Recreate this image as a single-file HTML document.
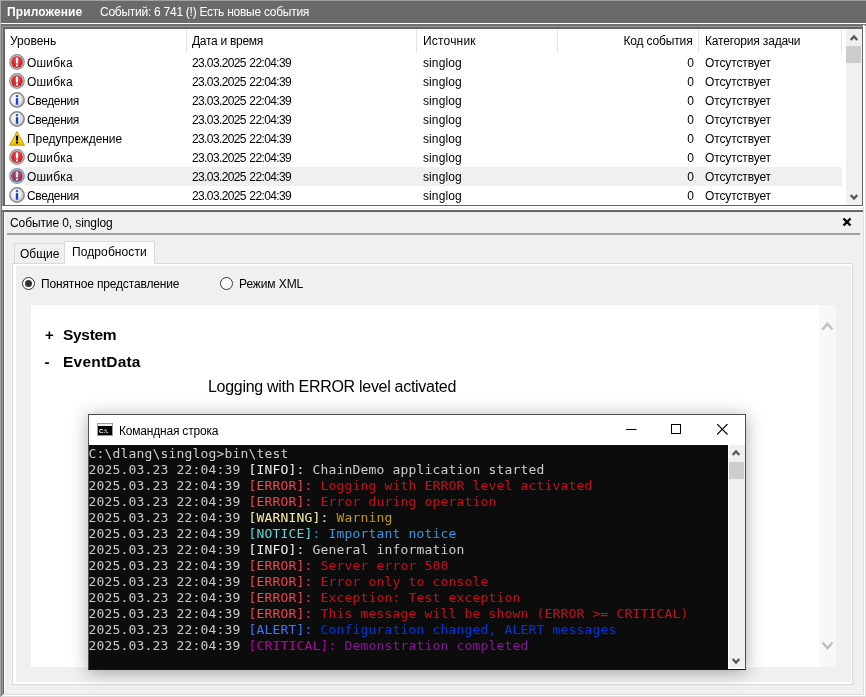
<!DOCTYPE html>
<html lang="ru">
<head>
<meta charset="utf-8">
<title>Просмотр событий</title>
<style>
html,body{margin:0;padding:0;}
body{will-change:transform;width:866px;height:697px;overflow:hidden;position:relative;background:#f0f0f0;font-family:"Liberation Sans",sans-serif;font-size:12px;color:#000;}
.a{position:absolute;}
.t{position:absolute;white-space:nowrap;line-height:16px;height:16px;}
#hdr{left:0;top:0;width:866px;height:23px;background:#6a6a6a;}
#hdr .t{color:#fff;top:4px;}
/* list */
#list{left:5px;top:29px;width:857px;height:176px;background:#fff;overflow:hidden;}
.row{position:absolute;left:0;width:841px;height:19px;}
.row .t{top:2px;}
.sel{position:absolute;left:20px;top:0;width:817px;height:19px;background:#f0f0f0;}
.ic{position:absolute;left:4px;top:1px;width:16px;height:16px;}
.hd .t{top:4px;}
.div{position:absolute;top:0;width:1px;height:24px;background:#e5e5e5;}
/* console */
#cmd{left:88px;top:414px;width:656px;height:254px;border:1px solid #505050;border-bottom-color:#161616;background:#fff;box-shadow:0 2px 16px rgba(0,0,0,.34);}
#con{left:0;top:30px;width:639px;height:224px;background:#0c0c0c;font-family:"DejaVu Sans Mono","Liberation Mono",monospace;font-size:13px;color:#ccc;overflow:hidden;}
#con div{position:absolute;left:-.5px;margin-top:1px;height:16px;line-height:16px;white-space:pre;letter-spacing:.174px;}
.w{color:#f2f2f2}.r{color:#c50f1f}.R{color:#e74856}.y{color:#c19c00}.Y{color:#f9f1a5}.c{color:#3a96dd}.C{color:#61d6d6}.b{color:#0037da}.B{color:#3b78ff}.m{color:#881798}.M{color:#b4009e}

#h1{letter-spacing:.11px}#h2{letter-spacing:-.26px}#c2{letter-spacing:-.28px}#c3{letter-spacing:.19px}#c4{letter-spacing:-.15px}#c5{letter-spacing:-.16px}
#d1{letter-spacing:-.1px}#r1{letter-spacing:-.15px}#t2{letter-spacing:.1px}#r2{letter-spacing:-.1px}#x5{letter-spacing:-.29px}#w1{letter-spacing:-.2px}
.lvE,.lvS{letter-spacing:.2px}.lvI{letter-spacing:-.37px}.lvW{letter-spacing:-.08px}.dt{letter-spacing:-.62px;word-spacing:.8px}.src{letter-spacing:.1px}.cat{letter-spacing:-.12px}
</style>
</head>
<body>
<!-- window frame edges -->
<div class="a" id="hdr">
  <span class="t" id="h1" style="left:7px;font-weight:bold;">Приложение</span>
  <span class="t" id="h2" style="left:100px;">Событий: 6 741 (!) Есть новые события</span>
</div>
<div class="a" style="left:0;top:0;width:866px;height:1px;background:#a0a0a0;"></div>
<div class="a" style="left:0;top:23px;width:866px;height:1px;background:#fff;"></div>
<div class="a" style="left:0;top:24px;width:866px;height:182px;background:#707070;"></div>
<div class="a" style="left:2px;top:26px;width:862px;height:1px;background:#9a9a9a;"></div>
<div class="a" style="left:2px;top:27px;width:1px;height:179px;background:#9a9a9a;"></div>
<div class="a" style="left:3px;top:27px;width:860px;height:179px;background:#666;"></div>
<div class="a" style="left:863px;top:25px;width:2px;height:181px;background:#fff;"></div>
<div class="a" style="left:865px;top:26px;width:1px;height:671px;background:#ddd;"></div>

<div class="a" id="list">
  <div class="row hd" style="top:0;height:24px;">
    <span class="t" id="c1" style="left:5px;">Уровень</span>
    <span class="t" id="c2" style="left:187px;">Дата и время</span>
    <span class="t" id="c3" style="left:418px;">Источник</span>
    <span class="t" id="c4" style="right:153.5px;">Код события</span>
    <span class="t" id="c5" style="left:700px;">Категория задачи</span>
    <div class="div" style="left:181px;"></div>
    <div class="div" style="left:411px;"></div>
    <div class="div" style="left:552px;"></div>
    <div class="div" style="left:693px;"></div>
    <div class="div" style="left:836px;"></div>
  </div>
<!--ROWS-->
  <div class="row" style="top:24px;"><svg class="ic" viewBox="0 0 16 16"><defs><radialGradient id="gE0" cx="50%" cy="25%" r="75%"><stop offset="0" stop-color="#e8474a"/><stop offset="1" stop-color="#c01f25"/></radialGradient></defs><circle cx="8" cy="8" r="7.15" fill="#ededed" stroke="#959595" stroke-width="1.5"/><circle cx="8" cy="8" r="5.9" fill="url(#gE0)"/><rect x="6.9" y="3.4" width="2.2" height="6.2" rx="0.6" fill="#ffffff"/><rect x="6.9" y="10.5" width="2.2" height="2" fill="#ffffff"/></svg><span class="t lvE" style="left:22px;">Ошибка</span><span class="t dt" style="left:187px;">23.03.2025 22:04:39</span><span class="t src" style="left:418px;">singlog</span><span class="t" style="right:152px;">0</span><span class="t cat" style="left:700px;">Отсутствует</span></div>
  <div class="row" style="top:43px;"><svg class="ic" viewBox="0 0 16 16"><defs><radialGradient id="gE1" cx="50%" cy="25%" r="75%"><stop offset="0" stop-color="#e8474a"/><stop offset="1" stop-color="#c01f25"/></radialGradient></defs><circle cx="8" cy="8" r="7.15" fill="#ededed" stroke="#959595" stroke-width="1.5"/><circle cx="8" cy="8" r="5.9" fill="url(#gE1)"/><rect x="6.9" y="3.4" width="2.2" height="6.2" rx="0.6" fill="#ffffff"/><rect x="6.9" y="10.5" width="2.2" height="2" fill="#ffffff"/></svg><span class="t lvE" style="left:22px;">Ошибка</span><span class="t dt" style="left:187px;">23.03.2025 22:04:39</span><span class="t src" style="left:418px;">singlog</span><span class="t" style="right:152px;">0</span><span class="t cat" style="left:700px;">Отсутствует</span></div>
  <div class="row" style="top:62px;"><svg class="ic" viewBox="0 0 16 16"><defs><radialGradient id="gI2" cx="42%" cy="42%" r="62%"><stop offset="0" stop-color="#ffffff"/><stop offset="0.55" stop-color="#ececec"/><stop offset="1" stop-color="#b4b4b4"/></radialGradient></defs><circle cx="8" cy="8" r="7.15" fill="url(#gI2)" stroke="#8a8a8a" stroke-width="1.5"/><rect x="6.8" y="3" width="2.4" height="2.2" rx="0.8" fill="#2a57c8"/><rect x="6.8" y="6.1" width="2.4" height="6.6" fill="#1446c2"/></svg><span class="t lvI" style="left:22px;">Сведения</span><span class="t dt" style="left:187px;">23.03.2025 22:04:39</span><span class="t src" style="left:418px;">singlog</span><span class="t" style="right:152px;">0</span><span class="t cat" style="left:700px;">Отсутствует</span></div>
  <div class="row" style="top:81px;"><svg class="ic" viewBox="0 0 16 16"><defs><radialGradient id="gI3" cx="42%" cy="42%" r="62%"><stop offset="0" stop-color="#ffffff"/><stop offset="0.55" stop-color="#ececec"/><stop offset="1" stop-color="#b4b4b4"/></radialGradient></defs><circle cx="8" cy="8" r="7.15" fill="url(#gI3)" stroke="#8a8a8a" stroke-width="1.5"/><rect x="6.8" y="3" width="2.4" height="2.2" rx="0.8" fill="#2a57c8"/><rect x="6.8" y="6.1" width="2.4" height="6.6" fill="#1446c2"/></svg><span class="t lvI" style="left:22px;">Сведения</span><span class="t dt" style="left:187px;">23.03.2025 22:04:39</span><span class="t src" style="left:418px;">singlog</span><span class="t" style="right:152px;">0</span><span class="t cat" style="left:700px;">Отсутствует</span></div>
  <div class="row" style="top:100px;"><svg class="ic" viewBox="0 0 16 16"><defs><linearGradient id="gW4" x1="0" y1="0" x2="0" y2="1"><stop offset="0" stop-color="#fff27a"/><stop offset="1" stop-color="#f0c000"/></linearGradient></defs><path d="M8 1.8 L15.3 15.2 H0.7 Z" fill="url(#gW4)" stroke="#d4a400" stroke-width="1.2" stroke-linejoin="round"/><rect x="6.9" y="5.6" width="2.2" height="5" fill="#000"/><rect x="6.9" y="11.5" width="2.2" height="2" fill="#000"/></svg><span class="t lvW" style="left:22px;">Предупреждение</span><span class="t dt" style="left:187px;">23.03.2025 22:04:39</span><span class="t src" style="left:418px;">singlog</span><span class="t" style="right:152px;">0</span><span class="t cat" style="left:700px;">Отсутствует</span></div>
  <div class="row" style="top:119px;"><svg class="ic" viewBox="0 0 16 16"><defs><radialGradient id="gE5" cx="50%" cy="25%" r="75%"><stop offset="0" stop-color="#e8474a"/><stop offset="1" stop-color="#c01f25"/></radialGradient></defs><circle cx="8" cy="8" r="7.15" fill="#ededed" stroke="#959595" stroke-width="1.5"/><circle cx="8" cy="8" r="5.9" fill="url(#gE5)"/><rect x="6.9" y="3.4" width="2.2" height="6.2" rx="0.6" fill="#ffffff"/><rect x="6.9" y="10.5" width="2.2" height="2" fill="#ffffff"/></svg><span class="t lvE" style="left:22px;">Ошибка</span><span class="t dt" style="left:187px;">23.03.2025 22:04:39</span><span class="t src" style="left:418px;">singlog</span><span class="t" style="right:152px;">0</span><span class="t cat" style="left:700px;">Отсутствует</span></div>
  <div class="row" style="top:138px;"><div class="sel"></div><svg class="ic" viewBox="0 0 16 16"><defs><radialGradient id="gE6" cx="50%" cy="25%" r="75%"><stop offset="0" stop-color="#b4506e"/><stop offset="1" stop-color="#8f2f4c"/></radialGradient></defs><circle cx="8" cy="8" r="7.15" fill="#ededed" stroke="#6c9cc6" stroke-width="1.5"/><circle cx="8" cy="8" r="5.9" fill="url(#gE6)"/><rect x="6.9" y="3.4" width="2.2" height="6.2" rx="0.6" fill="#bfe6ff"/><rect x="6.9" y="10.5" width="2.2" height="2" fill="#bfe6ff"/></svg><span class="t lvS" style="left:22px;">Ошибка</span><span class="t dt" style="left:187px;">23.03.2025 22:04:39</span><span class="t src" style="left:418px;">singlog</span><span class="t" style="right:152px;">0</span><span class="t cat" style="left:700px;">Отсутствует</span></div>
  <div class="row" style="top:157px;"><svg class="ic" viewBox="0 0 16 16"><defs><radialGradient id="gI7" cx="42%" cy="42%" r="62%"><stop offset="0" stop-color="#ffffff"/><stop offset="0.55" stop-color="#ececec"/><stop offset="1" stop-color="#b4b4b4"/></radialGradient></defs><circle cx="8" cy="8" r="7.15" fill="url(#gI7)" stroke="#8a8a8a" stroke-width="1.5"/><rect x="6.8" y="3" width="2.4" height="2.2" rx="0.8" fill="#2a57c8"/><rect x="6.8" y="6.1" width="2.4" height="6.6" fill="#1446c2"/></svg><span class="t lvI" style="left:22px;">Сведения</span><span class="t dt" style="left:187px;">23.03.2025 22:04:39</span><span class="t src" style="left:418px;">singlog</span><span class="t" style="right:152px;">0</span><span class="t cat" style="left:700px;">Отсутствует</span></div>
<!--/ROWS-->
  <div class="a" style="left:841px;top:0;width:16px;height:176px;background:#f0f0f0;"></div>
  <div class="a" style="left:841px;top:17px;width:15px;height:17px;background:#cdcdcd;"></div>
  <svg class="a" style="left:843.5px;top:5px;" width="10" height="8" viewBox="0 0 10 8"><path d="M1.7 6 L5 2.5 L8.3 6" stroke="#555" stroke-width="2.3" fill="none"/></svg>
  <svg class="a" style="left:843.5px;top:164px;" width="10" height="8" viewBox="0 0 10 8"><path d="M1.7 2 L5 5.5 L8.3 2" stroke="#555" stroke-width="2.3" fill="none"/></svg>
</div>

<!-- splitter -->
<div class="a" style="left:2px;top:206px;width:863px;height:4px;background:#fff;"></div>
<div class="a" style="left:2px;top:208px;width:863px;height:1px;background:#f0f0f0;"></div>
<div class="a" style="left:0;top:210px;width:863px;height:2px;background:#666;"></div>
<!-- left edges -->
<div class="a" style="left:0;top:0;width:1px;height:697px;background:#a8a8a8;"></div>
<div class="a" style="left:1px;top:24px;width:1px;height:673px;background:#777;"></div>
<div class="a" style="left:2px;top:212px;width:1px;height:483px;background:#999;"></div>
<div class="a" style="left:3px;top:212px;width:1px;height:482px;background:#666;"></div>
<div class="a" style="left:4px;top:212px;width:1px;height:483px;background:#fff;"></div>
<div class="a" style="left:863px;top:206px;width:1px;height:491px;background:#ddd;"></div>
<div class="a" style="left:864px;top:206px;width:1px;height:491px;background:#fff;"></div>
<div class="a" style="left:4px;top:694px;width:859px;height:1px;background:#ddd;"></div>
<div class="a" style="left:2px;top:695px;width:863px;height:1px;background:#fff;"></div>
<div class="a" style="left:1px;top:696px;width:865px;height:1px;background:#ddd;"></div>

<!-- details pane -->
<span class="t" id="d1" style="left:10px;top:215px;">Событие 0, singlog</span>
<svg class="a" style="left:842px;top:217px;" width="10" height="10" viewBox="0 0 10 10"><path d="M1.5 1.5 L8.5 8.5 M8.5 1.5 L1.5 8.5" stroke="#000" stroke-width="2.4" fill="none"/></svg>
<div class="a" style="left:7px;top:233px;width:853px;height:2px;background:#a0a0a0;"></div>

<!-- tab control -->
<div class="a" style="left:12px;top:263px;width:841px;height:422px;border:1px solid #d9d9d9;box-sizing:border-box;box-shadow:inset 3px 1px 0 #fff,inset -1px -2px 0 #fff,inset 0 2px 0 #f7f7f7;"></div>
<div class="a" style="left:14px;top:243px;width:51px;height:20px;border:1px solid #d9d9d9;border-bottom:none;box-sizing:border-box;background:#f0f0f0;"></div>
<div class="a" style="left:64px;top:241px;width:91px;height:23px;border:1px solid #d9d9d9;border-bottom:none;box-sizing:border-box;background:#fcfcfc;"></div>
<span class="t" id="t1" style="left:20px;top:246px;">Общие</span>
<span class="t" id="t2" style="left:72px;top:244px;">Подробности</span>

<!-- radios -->
<div class="a" style="left:22px;top:277px;width:13px;height:13px;border:1px solid #333;border-radius:50%;box-sizing:border-box;background:#fff;"></div>
<div class="a" style="left:25px;top:280px;width:7px;height:7px;border-radius:50%;background:#333;"></div>
<span class="t" id="r1" style="left:41px;top:276px;">Понятное представление</span>
<div class="a" style="left:220px;top:277px;width:13px;height:13px;border:1px solid #333;border-radius:50%;box-sizing:border-box;background:#fff;"></div>
<span class="t" id="r2" style="left:239px;top:276px;">Режим XML</span>

<!-- browser area -->
<div class="a" style="left:31px;top:305px;width:788px;height:362px;background:#fff;"></div>
<div class="a" style="left:819px;top:305px;width:17px;height:362px;background:#f8f8f8;"></div>
<svg class="a" style="left:821px;top:321px;" width="13" height="11" viewBox="0 0 13 11"><path d="M1.5 8.5 L6.5 3 L11.5 8.5" stroke="#c0c0c0" stroke-width="2.6" fill="none"/></svg>
<svg class="a" style="left:821px;top:640px;" width="13" height="11" viewBox="0 0 13 11"><path d="M1.5 2.5 L6.5 8 L11.5 2.5" stroke="#c0c0c0" stroke-width="2.6" fill="none"/></svg>
<span class="t" id="x1" style="left:45px;top:325px;font-size:15px;font-weight:bold;line-height:20px;height:20px;">+</span>
<span class="t" id="x2" style="left:63px;top:325px;font-size:15.5px;letter-spacing:-.3px;font-weight:bold;line-height:20px;height:20px;">System</span>
<span class="t" id="x3" style="left:44.5px;top:352px;font-size:15px;font-weight:bold;line-height:20px;height:20px;">-</span>
<span class="t" id="x4" style="left:63px;top:352px;font-size:15.5px;letter-spacing:.21px;font-weight:bold;line-height:20px;height:20px;">EventData</span>
<span class="t" id="x5" style="left:208px;top:377px;font-size:16px;line-height:20px;height:20px;">Logging with ERROR level activated</span>

<!-- command prompt window -->
<div class="a" id="cmd">
  <svg class="a" style="left:8px;top:8px;" width="16" height="13" viewBox="0 0 16 13"><rect x="0" y="0" width="16" height="13" fill="#9a9a9a"/><rect x="1" y="1" width="14" height="2" fill="#f0f0f0"/><rect x="1" y="3" width="14" height="9" fill="#000"/><text x="2" y="10" font-family="Liberation Sans,sans-serif" font-size="6" font-weight="bold" fill="#fff">C:\.</text></svg>
  <span class="t" id="w1" style="left:30px;top:8px;">Командная строка</span>
  <svg class="a" style="left:537px;top:9px;" width="11" height="11" viewBox="0 0 11 11"><path d="M0 5.5 H10.5" stroke="#000" stroke-width="1"/></svg>
  <svg class="a" style="left:582px;top:9px;" width="11" height="11" viewBox="0 0 11 11"><rect x="0.5" y="0.5" width="9" height="9" stroke="#000" stroke-width="1" fill="none"/></svg>
  <svg class="a" style="left:628px;top:9px;" width="11" height="11" viewBox="0 0 11 11"><path d="M0 0 L10.5 10.5 M10.5 0 L0 10.5" stroke="#000" stroke-width="1.1"/></svg>
  <div class="a" id="con">
<div style="top:0">C:\dlang\singlog&gt;bin\test</div>
<div style="top:16px">2025.03.23 22:04:39 <span class="w">[INFO]:</span> ChainDemo application started</div>
<div style="top:32px">2025.03.23 22:04:39 <span class="R">[ERROR]:</span><span class="r"> Logging with ERROR level activated</span></div>
<div style="top:48px">2025.03.23 22:04:39 <span class="R">[ERROR]:</span><span class="r"> Error during operation</span></div>
<div style="top:64px">2025.03.23 22:04:39 <span class="Y">[WARNING]:</span><span class="y"> Warning</span></div>
<div style="top:80px">2025.03.23 22:04:39 <span class="C">[NOTICE]</span><span class="c">: Important notice</span></div>
<div style="top:96px">2025.03.23 22:04:39 <span class="w">[INFO]:</span> General information</div>
<div style="top:112px">2025.03.23 22:04:39 <span class="R">[ERROR]:</span><span class="r"> Server error 500</span></div>
<div style="top:128px">2025.03.23 22:04:39 <span class="R">[ERROR]:</span><span class="r"> Error only to console</span></div>
<div style="top:144px">2025.03.23 22:04:39 <span class="R">[ERROR]:</span><span class="r"> Exception: Test exception</span></div>
<div style="top:160px">2025.03.23 22:04:39 <span class="R">[ERROR]:</span><span class="r"> This message will be shown (ERROR &gt;= CRITICAL)</span></div>
<div style="top:176px">2025.03.23 22:04:39 <span class="B">[ALERT]:</span><span class="b"> Configuration changed, ALERT messages</span></div>
<div style="top:192px">2025.03.23 22:04:39 <span class="M">[CRITICAL]:</span><span class="m"> Demonstration completed</span></div>
  </div>
  <div class="a" style="left:639px;top:30px;width:16px;height:223px;background:#f0f0f0;border-left:1px solid #fff;border-bottom:1px solid #fff;"></div>
  <div class="a" style="left:640px;top:47px;width:15px;height:17px;background:#cdcdcd;"></div>
  <svg class="a" style="left:642px;top:34px;" width="10" height="8" viewBox="0 0 10 8"><path d="M1.7 6 L5 2.5 L8.3 6" stroke="#555" stroke-width="2.3" fill="none"/></svg>
  <svg class="a" style="left:642px;top:242px;" width="10" height="8" viewBox="0 0 10 8"><path d="M1.7 2 L5 5.5 L8.3 2" stroke="#555" stroke-width="2.3" fill="none"/></svg>
</div>
</body>
</html>
